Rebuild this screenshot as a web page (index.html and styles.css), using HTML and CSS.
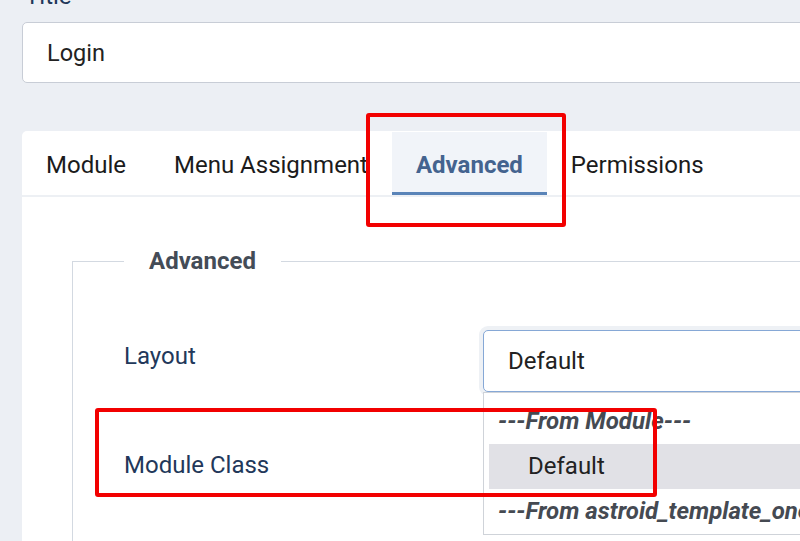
FILE: index.html
```html
<!DOCTYPE html>
<html lang="en">
<head>
    <meta charset="UTF-8">
    <title>Module - Login</title>
    <link rel="stylesheet" href="styles.css">
</head>
<body>
    <div class="page">
        <!-- Title field -->
        <div class="field-title">
            <label class="title-label" for="title">Title</label>
            <div class="title-input" id="title">Login</div>
        </div>

        <!-- Tabs card -->
        <div class="card">
            <div class="tabs">
                <div class="tab">Module</div>
                <div class="tab">Menu Assignment</div>
                <div class="tab active">Advanced</div>
                <div class="tab">Permissions</div>
            </div>

            <div class="card-body">
                <fieldset class="options">
                    <legend>Advanced</legend>

                    <div class="row">
                        <div class="row-label">Layout</div>
                        <div class="row-control">
                            <div class="select">Default</div>
                            <!-- open dropdown list -->
                            <div class="dropdown">
                                <div class="group">---From Module---</div>
                                <div class="option selected">Default</div>
                                <div class="group">---From astroid_template_one---</div>
                            </div>
                        </div>
                    </div>

                    <div class="row">
                        <div class="row-label">Module Class</div>
                        <div class="row-control">
                            <div class="input"></div>
                        </div>
                    </div>
                </fieldset>
            </div>
        </div>
    </div>

    <!-- annotation boxes -->
    <div class="mark mark-tab"></div>
    <div class="mark mark-class"></div>
</body>
</html>
```

FILE: styles.css
```css
/* Reset */
* {
    margin: 0;
    padding: 0;
    box-sizing: border-box;
}

body {
    font-family: 'Roboto', 'Liberation Sans', sans-serif;
    background-color: #eceff4;
    color: #222;
    overflow: hidden;
    height: 541px;
    position: relative;
}

.page {
    width: 1000px;
    margin-top: -18px;
    padding-left: 22px;
}

/* Title */
.title-label {
    display: block;
    font-size: 24px;
    line-height: 28px;
    color: #22385a;
    margin-left: 3px;
    margin-bottom: 12px;
}

.title-input {
    height: 61px;
    background: #fff;
    border: 1px solid #c8cdd6;
    border-radius: 5px;
    padding: 1px 0 0 24px;
    font-size: 23.5px;
    line-height: 58px;
    color: #222;
}

/* Card */
.card {
    margin-top: 48px;
    background: #fff;
    border-radius: 5px 0 0 0;
    height: 500px;
}

.tabs {
    display: flex;
    padding-top: 1px;
    border-bottom: 2px solid #edf0f4;
}

.tab {
    padding: 4px 24px 0;
    height: 63px;
    line-height: 59px;
    font-size: 24px;
    color: #1b1b1b;
}

.tab.active {
    background: #f1f4f9;
    border-bottom: 3px solid #5a84b8;
    color: #44638f;
    font-weight: 700;
}

.card-body {
    padding: 50px 0 0 50px;
}

/* Fieldset */
.options {
    border: 1px solid #d3d9e1;
    border-right: none;
    padding: 55px 0 0 51px;
    height: 400px;
}

.options legend {
    padding: 0 25px;
    font-size: 24px;
    font-weight: 700;
    color: #444c57;
    line-height: 28px;
}

.row {
    display: grid;
    grid-template-columns: 359px 1fr;
    align-items: start;
    margin-bottom: 47px;
}

.row-label {
    padding-top: 12px;
    font-size: 24px;
    line-height: 28px;
    color: #22385a;
}

.row-control {
    position: relative;
}

.select {
    height: 62px;
    border: 1px solid #86a8d6;
    border-radius: 5px;
    padding-left: 24px;
    font-size: 24px;
    line-height: 60px;
    color: #222;
    background: #fff;
    box-shadow: 0 0 0 4px #eef1f5;
}

.input {
    height: 62px;
}

/* Open dropdown */
.dropdown {
    position: absolute;
    top: 62px;
    left: 0;
    width: 600px;
    background: #fff;
    border: 1px solid #cfd3d9;
    padding: 6px 0 0 5px;
    z-index: 2;
}

.dropdown .group {
    height: 45px;
    line-height: 45px;
    padding-left: 9px;
    font-size: 24px;
    font-weight: 700;
    font-style: italic;
    color: #454a52;
    white-space: nowrap;
}

.dropdown .option {
    height: 45px;
    line-height: 45px;
    padding-left: 39px;
    font-size: 24px;
    color: #222;
}

.dropdown .option.selected {
    background: #e1e1e6;
}

/* Red annotation boxes */
.mark {
    position: absolute;
    border: 4px solid #f20000;
    border-radius: 3px;
    z-index: 5;
}

.mark-tab {
    left: 366px;
    top: 113px;
    width: 200px;
    height: 114px;
}

.mark-class {
    left: 95px;
    top: 408px;
    width: 562px;
    height: 89px;
}
```
